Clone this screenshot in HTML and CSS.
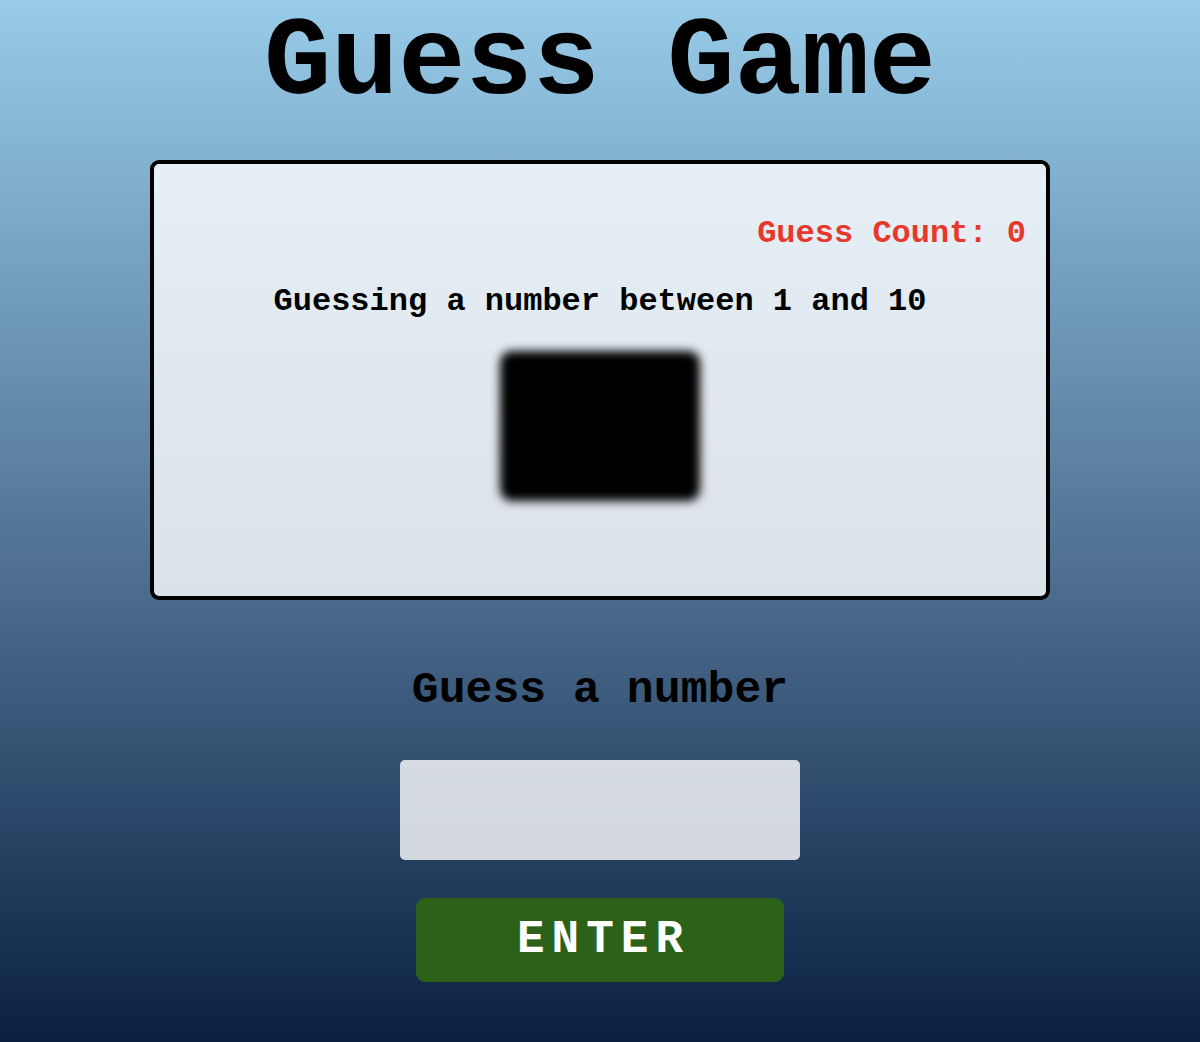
FILE: index.html
```html
<!DOCTYPE html>
<html lang="en">
<head>
<meta charset="utf-8">
<title>Guess Game</title>
<link rel="stylesheet" href="styles.css">
</head>
<body>
<main class="page">
  <h1 class="title">Guess Game</h1>
  <section class="board">
    <p class="count">Guess Count: 0</p>
    <p class="hint">Guessing a number between 1 and 10</p>
    <div class="secret">7</div>
  </section>
  <h2 class="prompt">Guess a number</h2>
  <input class="guess-input" type="text" aria-label="Guess">
  <button class="enter-btn" type="button">ENTER</button>
</main>
</body>
</html>
```

FILE: styles.css
```css
html, body {
  margin: 0;
  padding: 0;
  height: 100%;
}

body {
  background: linear-gradient(to bottom, #98cce9 0%, #4a6a8b 58%, #0a2042 100%);
  font-family: "Liberation Mono", "Courier New", monospace;
  font-weight: bold;
  color: #000;
  min-height: 1042px;
}

.page {
  display: flex;
  flex-direction: column;
  align-items: center;
}

.title {
  margin: 0;
  font-size: 112px;
  line-height: 128px;
  font-weight: bold;
}

.board {
  box-sizing: border-box;
  margin-top: 32px;
  width: 900px;
  height: 440px;
  border: 4px solid #000;
  border-radius: 9px;
  background: rgba(255, 255, 255, 0.8);
  display: flex;
  flex-direction: column;
  align-items: center;
  padding: 52px 20px 0;
}

.count {
  margin: 0;
  align-self: stretch;
  text-align: right;
  font-size: 32px;
  line-height: 36px;
  color: #e8382b;
}

.hint {
  margin: 32px 0 0;
  font-size: 32px;
  line-height: 36px;
}

.secret {
  margin-top: 31px;
  width: 200px;
  height: 150px;
  background: #000;
  color: #000;
  border-radius: 12px;
  filter: blur(5px);
  font-size: 80px;
  display: flex;
  align-items: center;
  justify-content: center;
}

.prompt {
  margin: 65px 0 0;
  font-size: 44.8px;
  line-height: 51px;
  font-weight: bold;
}

.guess-input {
  box-sizing: border-box;
  margin-top: 44px;
  width: 400px;
  height: 100px;
  border: none;
  border-radius: 5px;
  background: rgba(255, 255, 255, 0.8);
  font-family: inherit;
  font-size: 40px;
  text-align: center;
  outline: none;
}

.enter-btn {
  box-sizing: border-box;
  margin-top: 38px;
  width: 368px;
  height: 84px;
  border: none;
  border-radius: 9px;
  background: #2c611a;
  color: #fff;
  font-family: inherit;
  font-weight: bold;
  font-size: 46px;
  letter-spacing: 7px;
  padding: 0 0 0 7px;
}
```
